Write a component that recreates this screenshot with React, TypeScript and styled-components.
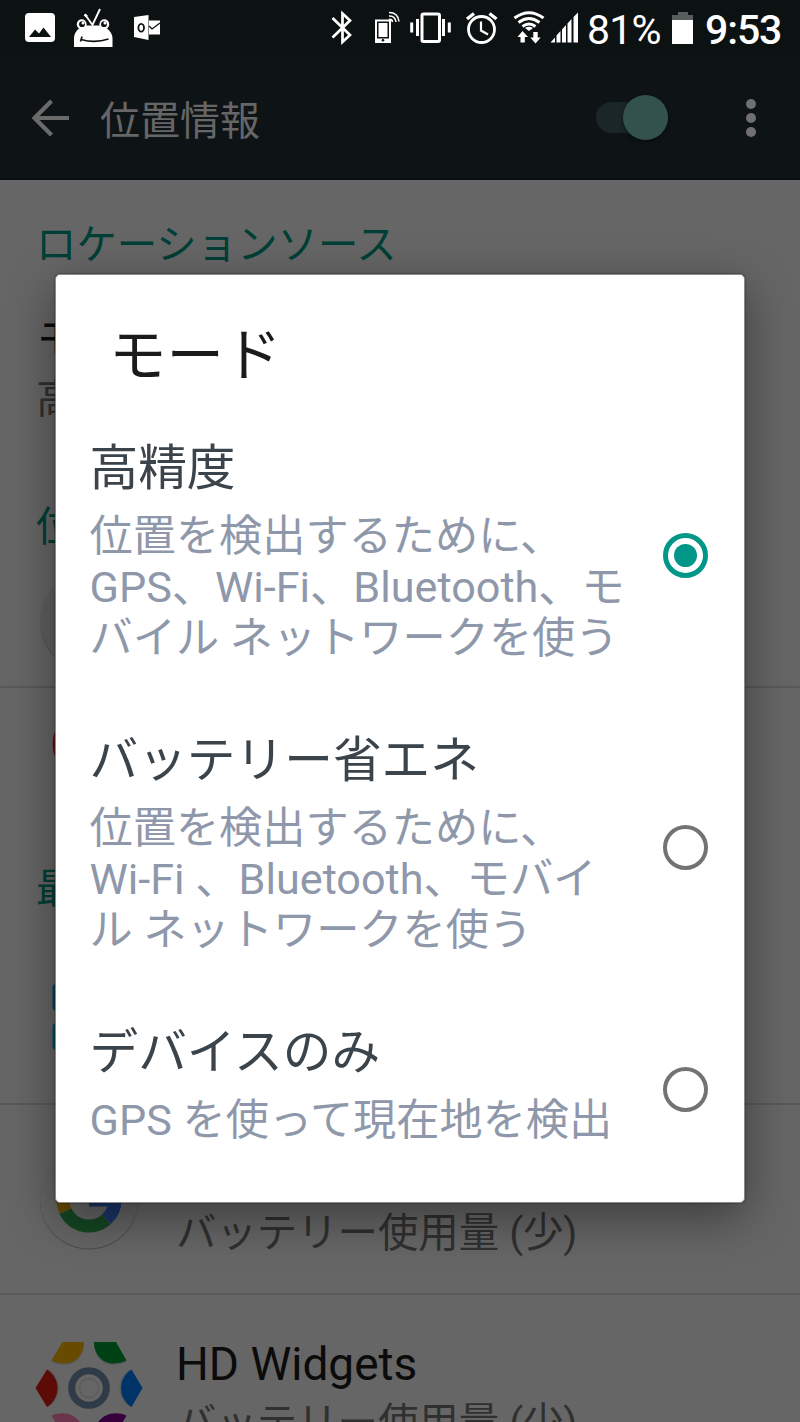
import React from 'react';
import styled, { createGlobalStyle } from 'styled-components';

const GlobalStyle = createGlobalStyle`
  * { box-sizing: border-box; }
  body {
    margin: 0;
    font-family: Roboto, "Noto Sans CJK JP", sans-serif;
    background: #666;
  }
`;

const Screen = styled.div`
  position: relative;
  width: 800px;
  height: 1422px;
  overflow: hidden;
  display: flex;
  flex-direction: column;
  background: #666;
`;

const StatusBar = styled.div`
  flex: none;
  height: 56px;
  display: flex;
  align-items: center;
  background: #0c1112;
  padding: 0 18px 0 25px;
  color: #fff;
`;

const Glyph = styled.svg<{ $gap?: number }>`
  flex: none;
  display: block;
  height: 56px;
  margin-left: ${(p) => p.$gap ?? 0}px;
`;

const Spacer = styled.div`
  flex: 1;
`;

const BatteryLevel = styled.span`
  width: 77px;
  margin-left: 7px;
  font-size: 41px;
  letter-spacing: -0.8px;
  line-height: 56px;
  padding-top: 4px;
  white-space: nowrap;
`;

const Clock = styled.span`
  width: 77px;
  margin-left: 12px;
  font-size: 41px;
  font-weight: 500;
  letter-spacing: -1.1px;
  line-height: 56px;
  padding-top: 4px;
  white-space: nowrap;
`;

const AppBar = styled.header`
  flex: none;
  height: 124px;
  display: flex;
  align-items: center;
  padding: 1px 44px 0 31px;
  background: #0e1416;
  border-bottom: 2px solid #0a0f10;
`;

const AppTitle = styled.h1`
  flex: 1;
  margin: 0 0 0 31px;
  padding-top: 8px;
  font-size: 40px;
  line-height: 60px;
  font-weight: 400;
  color: #666;
`;

const Toggle = styled.div`
  width: 72px;
  height: 31px;
  display: flex;
  align-items: center;
  justify-content: flex-end;
  background: #1a2628;
  border-radius: 16px;
`;

const Knob = styled.div`
  flex: none;
  width: 45px;
  height: 45px;
  border-radius: 50%;
  background: #33524e;
  box-shadow: 0 2px 4px rgba(0, 0, 0, 0.45);
`;

const Overflow = styled.div`
  display: flex;
  flex-direction: column;
  gap: 4px;
  margin-left: 78px;
`;

const Dot = styled.i`
  width: 10px;
  height: 10px;
  border-radius: 50%;
  background: #707070;
`;

const List = styled.main`
  flex: none;
  display: flex;
  flex-direction: column;
`;

const SectionTitle = styled.h2<{ $height: number; $top: number }>`
  margin: 0;
  height: ${(p) => p.$height}px;
  padding: ${(p) => p.$top}px 0 0 36px;
  font-size: 40.4px;
  line-height: 60px;
  font-weight: 400;
  color: #003f37;
`;

const Setting = styled.div`
  height: 170px;
  padding: 11px 0 0 36px;
`;

const Row = styled.div<{ $height: number; $divider?: boolean }>`
  height: ${(p) => p.$height}px;
  display: flex;
  align-items: center;
  padding-left: 34px;
  border-bottom: ${(p) => (p.$divider ? '2px solid #595959' : '0')};
`;

const RowIcon = styled.svg`
  flex: none;
  width: 110px;
  height: 110px;
`;

const RowText = styled.div`
  height: 120px;
  display: flex;
  flex-direction: column;
  justify-content: flex-end;
  margin: 6px 0 0 32px;
`;

const ItemTitle = styled.div`
  font-size: 46px;
  line-height: 58px;
  padding-bottom: 3px;
  color: #0b0b0b;
`;

const ItemSub = styled.div`
  font-size: 40.4px;
  line-height: 56px;
  color: #303030;
  white-space: nowrap;
`;

const Dialog = styled.section`
  position: absolute;
  left: 55px;
  top: 274px;
  width: 690px;
  height: 929px;
  border-radius: 5px;
  border: 1px solid #8a8a8a;
  background: #fff;
  box-shadow: 0 0 2px rgba(0, 0, 0, 0.6), 0 14px 50px rgba(0, 0, 0, 0.42);
  display: flex;
  flex-direction: column;
`;

const DialogTitle = styled.h2`
  margin: 0;
  height: 155px;
  padding: 42px 0 0 53px;
  font-size: 57.5px;
  line-height: 80px;
  font-weight: 400;
  color: #1b1b1b;
`;

const Option = styled.div<{ $height: number }>`
  height: ${(p) => p.$height}px;
  display: flex;
  align-items: flex-start;
  padding: 0 36px 0 33.5px;
`;

const OptionText = styled.div`
  flex: 1;
`;

const OptionTitle = styled.div`
  padding-top: 3px;
  font-size: 48.7px;
  line-height: 72px;
  color: #3b434b;
`;

const OptionDesc = styled.div`
  padding-top: 6px;
  font-size: 43.2px;
  line-height: 51px;
  color: #8f98aa;
  white-space: nowrap;
`;

const Radio = styled.div<{ $top: number; $on?: boolean }>`
  flex: none;
  width: 45px;
  height: 45px;
  margin-top: ${(p) => p.$top}px;
  border-radius: 50%;
  border: ${(p) => (p.$on ? '5px solid #009688' : '4.5px solid #737373')};
  display: grid;
  place-items: center;

  &::after {
    content: '';
    width: 23px;
    height: 23px;
    border-radius: 50%;
    background: ${(p) => (p.$on ? '#009688' : 'transparent')};
  }
`;

const options = [
  {
    title: '高精度',
    lines: ['位置を検出するために、', 'GPS、Wi-Fi、Bluetooth、モ', 'バイル ネットワークを使う'],
    height: 292,
    radioTop: 103,
    on: true,
  },
  {
    title: 'バッテリー省エネ',
    lines: ['位置を検出するために、', 'Wi-Fi 、Bluetooth、モバイ', 'ル ネットワークを使う'],
    height: 292,
    radioTop: 103,
  },
  { title: 'デバイスのみ', lines: ['GPS を使って現在地を検出'], height: 170, radioTop: 53 },
];

function StatusIcons() {
  return (
    <>
      <Glyph width={30} viewBox="25 0 30 56" fill="#fff">
        <path fillRule="evenodd" d="M29 13h22a4 4 0 0 1 4 4v21a4 4 0 0 1-4 4H29a4 4 0 0 1-4-4V17a4 4 0 0 1 4-4ZM29 37h22l-7.500-9.500-4.500 6-4-4Z" />
      </Glyph>
      <Glyph $gap={18} width={40} viewBox="73 0 40 56">
        <path d="M74 47v-9c0-4 2-7 5-9.500l6-3h16l6 3c3 2.500 5.500 5.500 5.500 9.500v9Z" fill="#fff" />
        <path d="M85 14.500 92.500 25 100 9" stroke="#fff" strokeWidth="1.900" fill="none" />
        <path d="M84.500 14.500l2.500 2" stroke="#fff" strokeWidth="2.600" />
        <circle cx="81.700" cy="24.200" r="4.900" fill="#fff" />
        <circle cx="104.300" cy="24.200" r="4.900" fill="#fff" />
        <circle cx="82" cy="24.200" r="2.900" fill="#0c1112" />
        <circle cx="104" cy="24.200" r="2.900" fill="#0c1112" />
        <circle cx="83" cy="23" r="1.500" fill="#fff" />
        <circle cx="105" cy="23" r="1.500" fill="#fff" />
        <path d="M81 39.500q14 4 27.500-.5M82 36.500l-1.500 5" stroke="#0c1112" strokeWidth="1.600" fill="none" />
      </Glyph>
      <Glyph $gap={20} width={28} viewBox="133 0 28 56">
        <path d="m134 17 14.500-2v25l-14.500-3Z" fill="#fff" />
        <path d="M149 20.500h11v14h-11Z" fill="#fff" />
        <path d="m149 26 3 3 8-6" stroke="#0c1112" strokeWidth="1.300" fill="none" />
        <ellipse cx="141.200" cy="27.800" rx="2.800" ry="3.900" stroke="#0c1112" strokeWidth="1.800" fill="none" />
      </Glyph>
    </>
  );
}

function SystemIcons() {
  return (
    <>
      <Glyph width={22} viewBox="331 0 22 56" fill="none" stroke="#fff" strokeWidth="2.700">
        <path d="m332.500 18 17.500 17-7.500 7V13.500l7.500 7-17.500 17" />
      </Glyph>
      <Glyph $gap={21} width={26} viewBox="374 0 26 56" fill="none" stroke="#fff">
        <path d="M376 20.500h14v21.500h-14Z" strokeWidth="2" />
        <path d="M378.500 23h9v14h-9Z" fill="#fff" stroke="none" />
        <path d="M375 38.500h16V43h-16Z" fill="#fff" stroke="none" />
        <circle cx="383" cy="40.300" r="1.300" fill="#0c1112" stroke="none" />
        <path d="M389 19.500q3-.5 3.500 2.500M389 16q6-.5 7 6M389 12.500q9 0 10 9" strokeWidth="1.600" />
      </Glyph>
      <Glyph $gap={10} width={42} viewBox="410 0 42 56" fill="none" stroke="#fff" strokeWidth="3">
        <rect x="422" y="14" width="17.500" height="27.500" rx="1.500" />
        <path d="M417.500 19v17M411.700 22.500v10M443.500 19v17M449.300 22.500v10" />
      </Glyph>
      <Glyph $gap={13} width={34} viewBox="465 0 34 56" fill="none" stroke="#fff" strokeWidth="2.800">
        <circle cx="481.500" cy="29.500" r="13" />
        <path d="M481 21.500v9l7 4" strokeWidth="2.200" />
        <path d="m467 19 7-5.500M496.500 19l-7-5.500" strokeWidth="3.400" />
      </Glyph>
      <Glyph $gap={14} width={34} viewBox="513 0 34 56" fill="none" stroke="#fff" strokeWidth="3">
        <path d="M514.500 18q14.500-10.500 29 0M518.500 22.500q10.500-8 21 0M522.500 26.500q6.500-5 13 0" />
        <path d="m525 28 4 3 4-3q-4-2.500-8 0Z" fill="#fff" stroke="none" />
        <path d="m522.500 31 5.500 6h-3.200v5.500h-4.300V37h-3ZM535.500 43.500l-5.200-6h3V32h4.400v5.500h3Z" fill="#fff" stroke="none" />
      </Glyph>
      <Glyph $gap={3} width={30} viewBox="550 0 30 56" fill="#fff">
        <path d="m550.500 42.500 4.500-5v5ZM556.500 42.500v-7l4-4.500v11.500ZM562 42.500V29.500l4-4.500v17.500ZM567.500 42.500V23.500l4-4.500v23.500ZM573.500 42.500V17l4.500-4.500v30Z" />
      </Glyph>
    </>
  );
}

function HexBloom() {
  return (
    <RowIcon viewBox="34 1334 110 110">
      <g fill="#5b5b5b">
        <path d="M62.500 1342H84c0 12-8 21.500-19 21.500q-8 0-13.500-3Z" transform="translate(0 1.500)" />
        <path d="M94 1342h22l10.500 18.500q-5.500 3-13.500 3c-11 0-19-9.500-19-21.500Z" transform="translate(0 1.500)" />
        <path d="m35.500 1388 11.500-18.500c14 9 14 28.500 0 37.500Z" transform="translate(1.500 0)" />
        <path d="m142.500 1388-11-18.500c-14 9-14 28.500 0 37.500Z" transform="translate(-1.500 0)" />
      </g>
      <path d="M62.500 1342H84c0 12-8 21.500-19 21.500q-8 0-13.500-3Z" fill="#684b00" />
      <path d="M94 1342h22l10.500 18.500q-5.500 3-13.500 3c-11 0-19-9.500-19-21.500Z" fill="#004015" />
      <path d="m35.500 1388 11.500-18.500c14 9 14 28.500 0 37.500Z" fill="#5c0b07" />
      <path d="m142.500 1388-11-18.500c-14 9-14 28.500 0 37.500Z" fill="#003468" />
      <path d="M51.500 1415.500c17-7 32 4 32.500 18.500H62.500Z" fill="#6a354b" />
      <path d="M126.500 1415.500c-17-7-32 4-32.500 18.500h22Z" fill="#35003b" />
      <circle cx="89" cy="1388" r="17.300" fill="none" stroke="#2f3b47" strokeWidth="7" />
      <circle cx="89" cy="1388" r="9.500" fill="none" stroke="#5c5c5c" strokeWidth="1.500" />
    </RowIcon>
  );
}

export default function App() {
  return (
    <Screen>
      <GlobalStyle />
      <StatusBar>
        <StatusIcons />
        <Spacer />
        <SystemIcons />
        <BatteryLevel>81%</BatteryLevel>
        <Glyph $gap={8} width={21} viewBox="671 0 21 56">
          <path d="M677 12h10v3h5v5h-21v-5h6Z" fill="#5a5d5e" />
          <path d="M671 20h21v24h-21Z" fill="#fff" />
        </Glyph>
        <Clock>9:53</Clock>
      </StatusBar>

      <AppBar>
        <svg width="38" height="38" viewBox="0 0 38 38" fill="none" stroke="#6a6a6a" strokeWidth="4.200">
          <path d="M38 19H4M20.500 2 3.500 19l17 17" />
        </svg>
        <AppTitle>位置情報</AppTitle>
        <Toggle>
          <Knob />
        </Toggle>
        <Overflow>
          <Dot />
          <Dot />
          <Dot />
        </Overflow>
      </AppBar>

      <List>
        <SectionTitle $height={120} $top={36}>ロケーションソース</SectionTitle>
        <Setting>
          <ItemTitle>モード</ItemTitle>
          <ItemSub>高精度</ItemSub>
        </Setting>
        <SectionTitle $height={86} $top={28}>位</SectionTitle>
        <Row $height={132} $divider>
          <RowIcon viewBox="0 0 110 110">
            <circle cx="55" cy="56" r="49" fill="#4d4d4d" />
            <circle cx="55" cy="55" r="49" fill="#606060" />
          </RowIcon>
        </Row>
        <Row $height={112}>
          <RowIcon viewBox="0 0 110 110">
            <circle cx="55" cy="55" r="36.500" fill="#6b1406" />
          </RowIcon>
        </Row>
        <SectionTitle $height={115} $top={60}>最</SectionTitle>
        <Row $height={190} $divider>
          <RowIcon viewBox="0 0 110 110">
            <rect x="18.500" y="30" width="31" height="27" rx="4" fill="#00455c" />
            <rect x="18.500" y="69" width="31" height="27" rx="4" fill="#00505c" />
          </RowIcon>
        </Row>
        <Row $height={190} $divider>
          <RowIcon viewBox="0 0 110 110">
            <circle cx="55" cy="56.500" r="49" fill="#4a4a4a" />
            <circle cx="55" cy="55.500" r="49" fill="#656565" />
            <g fill="none" strokeWidth="13">
              <path d="M31.400 45A26 26 0 0 0 31.500 67.200" stroke="#664b04" />
              <path d="M31.500 67.200A26 26 0 0 0 72.500 75.200" stroke="#154722" />
              <path d="M72.500 75.200A26 26 0 0 0 81 56" stroke="#1b356a" />
            </g>
            <path d="M55 50h32v12.500H55Z" fill="#1b356a" />
          </RowIcon>
          <RowText>
            <ItemSub>バッテリー使用量 (少)</ItemSub>
          </RowText>
        </Row>
        <Row $height={190} $divider>
          <HexBloom />
          <RowText>
            <ItemTitle>HD Widgets</ItemTitle>
            <ItemSub>バッテリー使用量 (少)</ItemSub>
          </RowText>
        </Row>
      </List>

      <Dialog>
        <DialogTitle>モード</DialogTitle>
        {options.map((o) => (
          <Option key={o.title} $height={o.height}>
            <OptionText>
              <OptionTitle>{o.title}</OptionTitle>
              <OptionDesc>
                {o.lines.map((line) => (
                  <div key={line}>{line}</div>
                ))}
              </OptionDesc>
            </OptionText>
            <Radio $top={o.radioTop} $on={o.on} />
          </Option>
        ))}
      </Dialog>
    </Screen>
  );
}
